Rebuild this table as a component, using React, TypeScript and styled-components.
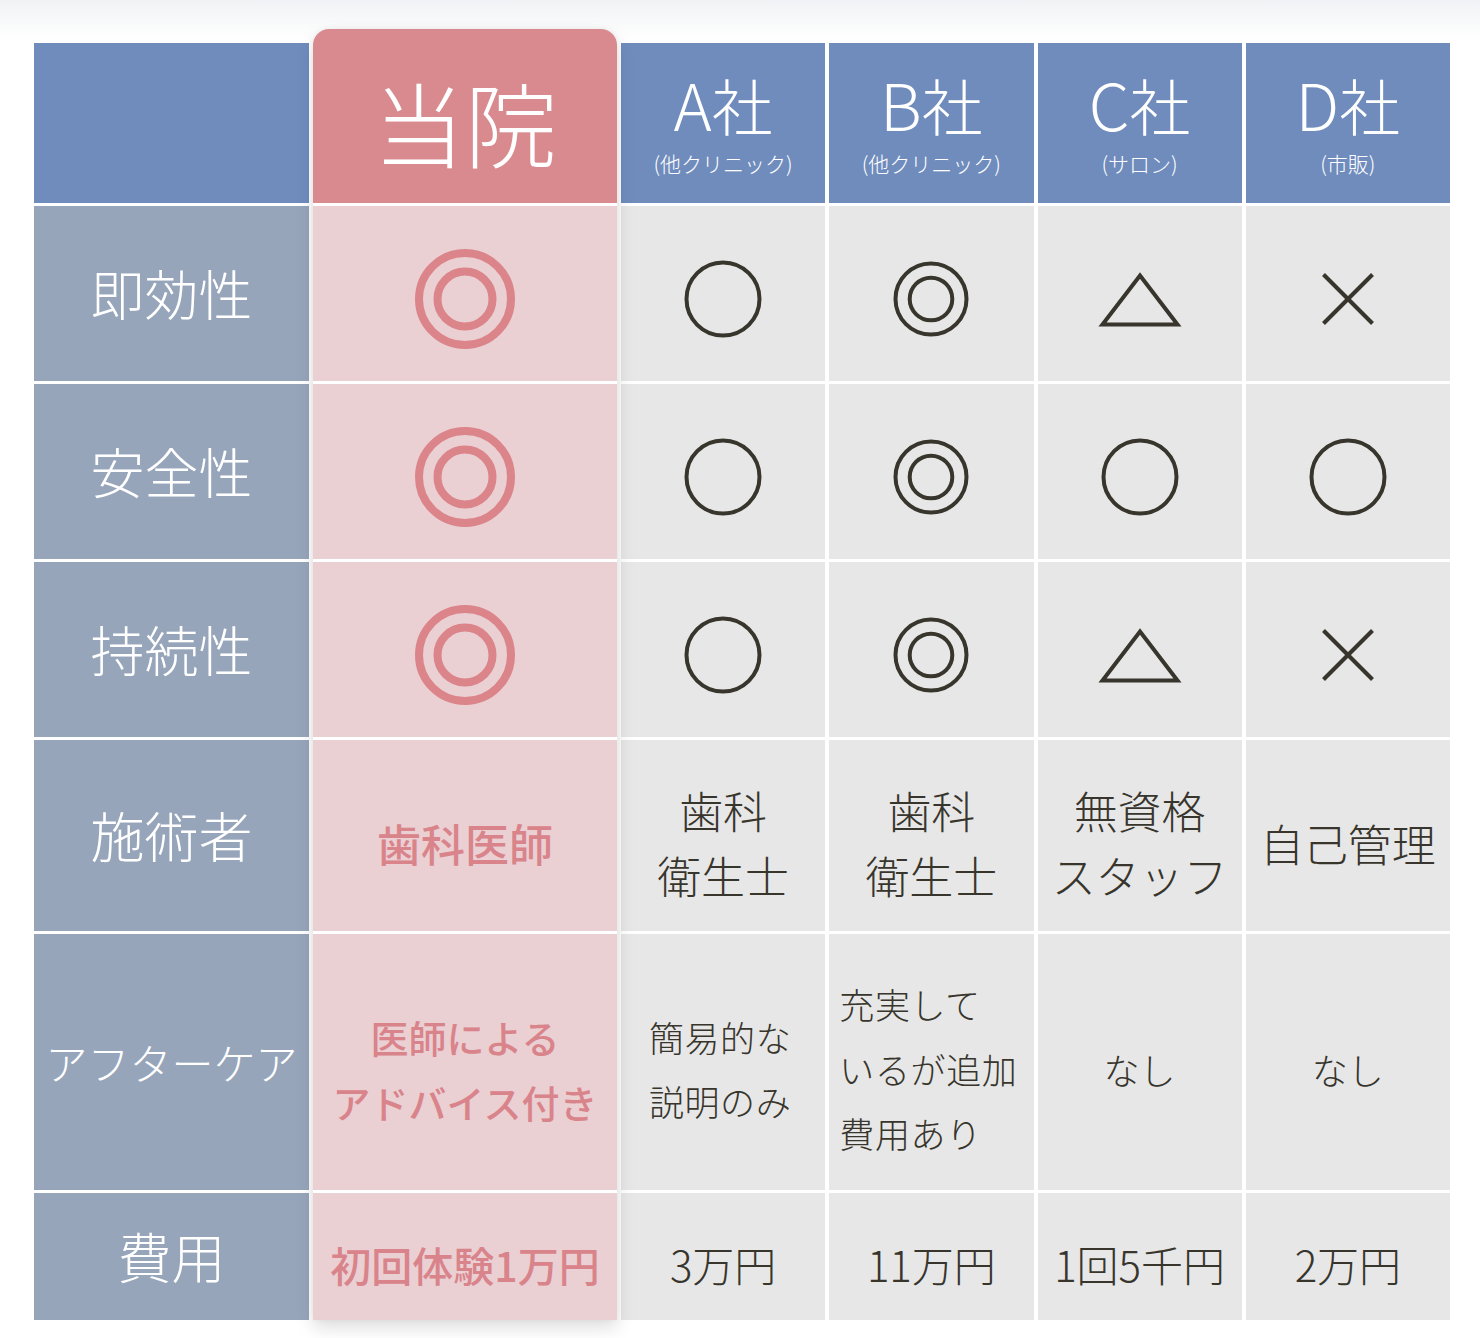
import React from "react";
import styled, { createGlobalStyle, css } from "styled-components";

const GlobalStyle = createGlobalStyle`
  html, body {
    margin: 0;
    padding: 0;
  }
  body {
    font-family: "Noto Sans CJK JP", "Noto Sans", sans-serif;
    background:
      linear-gradient(to bottom, #f1f2f5 0px, #f7f8f9 18px, #ffffff 40px) no-repeat;
    background-color: #ffffff;
  }
`;

const COLORS = {
  headBlue: "#6f8cbd",
  labelBlue: "#97a5bb",
  pinkHead: "#d98a8f",
  pinkCell: "#eacfd3",
  pinkInk: "#d9838a",
  grayCell: "#e7e7e7",
  ink: "#37352c",
};

const ROW_HEIGHTS = [175, 175, 175, 191, 256, 127];

const Page = styled.div`
  padding: 29px 0 18px 34px;
  width: 1416px;
`;

const Table = styled.div`
  display: flex;
  align-items: flex-end;
  gap: 4px;
`;

const Column = styled.div<{ $w: number }>`
  display: flex;
  flex-direction: column;
  gap: 3px;
  width: ${(p) => p.$w}px;
  flex: 0 0 ${(p) => p.$w}px;
`;

const FeaturedColumn = styled(Column)`
  position: relative;
  z-index: 1;
  background: #ffffff;
  border-radius: 16px 16px 0 0;
  box-shadow: 0 8px 18px rgba(0, 0, 0, 0.13), 0 0 6px rgba(0, 0, 0, 0.05);
`;

const HeadCell = styled.div`
  height: 160px;
  background: ${COLORS.headBlue};
  display: flex;
  flex-direction: column;
  align-items: center;
  justify-content: center;
  gap: 18px;
  padding-top: 1px;
  box-sizing: border-box;
  color: #ffffff;
`;

const FeaturedHead = styled.div`
  height: 174px;
  background: ${COLORS.pinkHead};
  border-radius: 16px 16px 0 0;
  display: flex;
  align-items: center;
  justify-content: center;
  padding-top: 10px;
  box-sizing: border-box;
  color: #ffffff;
  font-size: 92px;
  font-weight: 300;
  line-height: 1;
`;

const Brand = styled.div`
  font-size: 61px;
  font-weight: 300;
  line-height: 61px;
  height: 61px;
  white-space: nowrap;
`;

const BrandLetter = styled.span`
  font-size: 65px;
  font-weight: 300;
`;

const BrandSub = styled.div`
  font-size: 21px;
  font-weight: 300;
  line-height: 22px;
  white-space: nowrap;
`;

type Tone = "label" | "featured" | "plain";

const Cell = styled.div<{ $h: number; $tone: Tone }>`
  height: ${(p) => p.$h}px;
  box-sizing: border-box;
  display: flex;
  align-items: center;
  justify-content: center;
  text-align: center;
  ${(p) =>
    p.$tone === "label"
      ? css`
          background: ${COLORS.labelBlue};
          color: #ffffff;
        `
      : p.$tone === "featured"
      ? css`
          background: ${COLORS.pinkCell};
          color: ${COLORS.pinkInk};
          padding-top: 14px;
        `
      : css`
          background: ${COLORS.grayCell};
          color: ${COLORS.ink};
          padding-top: 14px;
        `}
`;

const LabelText = styled.div<{ $size: number }>`
  font-size: ${(p) => p.$size}px;
  font-weight: 300;
  line-height: 1.2;
  white-space: nowrap;
`;

const CellText = styled.div<{ $size: number; $lh: number; $bold?: boolean; $left?: boolean }>`
  font-size: ${(p) => p.$size}px;
  line-height: ${(p) => p.$lh}px;
  font-weight: ${(p) => (p.$bold ? 500 : 300)};
  text-align: ${(p) => (p.$left ? "left" : "center")};
  letter-spacing: ${(p) => (p.$left ? "0.6px" : "0")};
  margin-left: ${(p) => (p.$left ? "-6px" : "0")};
  white-space: nowrap;
`;

const SymbolBox = styled.div`
  display: flex;
  align-items: center;
  justify-content: center;
  margin-top: -4px;
`;

type Sym = "double" | "circle" | "triangle" | "cross";

const Symbol: React.FC<{ kind: Sym; featured?: boolean }> = ({ kind, featured }) => {
  const c = featured ? "#db8489" : COLORS.ink;
  if (kind === "double" && featured) {
    return (
      <svg width="104" height="104" viewBox="0 0 104 104">
        <circle cx="52" cy="52" r="46" fill="none" stroke={c} strokeWidth="8" />
        <circle cx="52" cy="52" r="27.5" fill="none" stroke={c} strokeWidth="8" />
      </svg>
    );
  }
  if (kind === "double") {
    return (
      <svg width="80" height="80" viewBox="0 0 80 80">
        <circle cx="40" cy="40" r="35.5" fill="none" stroke={c} strokeWidth="4" />
        <circle cx="40" cy="40" r="21.3" fill="none" stroke={c} strokeWidth="4" />
      </svg>
    );
  }
  if (kind === "circle") {
    return (
      <svg width="80" height="80" viewBox="0 0 80 80">
        <circle cx="40" cy="40" r="36.5" fill="none" stroke={c} strokeWidth="4" />
      </svg>
    );
  }
  if (kind === "triangle") {
    return (
      <svg width="90" height="64" viewBox="0 0 90 64">
        <polygon
          points="45,8.5 82.5,57.5 7.5,57.5"
          fill="none"
          stroke={c}
          strokeWidth="4"
          strokeLinejoin="miter"
        />
      </svg>
    );
  }
  return (
    <svg width="56" height="56" viewBox="0 0 56 56">
      <line x1="3.5" y1="3.5" x2="52.5" y2="52.5" stroke={c} strokeWidth="4" />
      <line x1="52.5" y1="3.5" x2="3.5" y2="52.5" stroke={c} strokeWidth="4" />
    </svg>
  );
};

type Content =
  | { t: "sym"; s: Sym }
  | { t: "text"; lines: string[]; size: number; lh: number; left?: boolean };

const rowLabels: { text: string; size: number }[] = [
  { text: "即効性", size: 54 },
  { text: "安全性", size: 54 },
  { text: "持続性", size: 54 },
  { text: "施術者", size: 54 },
  { text: "アフターケア", size: 42 },
  { text: "費用", size: 54 },
];

const featured: Content[] = [
  { t: "sym", s: "double" },
  { t: "sym", s: "double" },
  { t: "sym", s: "double" },
  { t: "text", lines: ["歯科医師"], size: 44, lh: 60 },
  { t: "text", lines: ["医師による", "アドバイス付き"], size: 38, lh: 65 },
  { t: "text", lines: ["初回体験1万円"], size: 41, lh: 56 },
];

const competitors: { letter: string; sub: string; cells: Content[] }[] = [
  {
    letter: "A",
    sub: "(他クリニック)",
    cells: [
      { t: "sym", s: "circle" },
      { t: "sym", s: "circle" },
      { t: "sym", s: "circle" },
      { t: "text", lines: ["歯科", "衛生士"], size: 44, lh: 65 },
      { t: "text", lines: ["簡易的な", "説明のみ"], size: 35, lh: 64, left: true },
      { t: "text", lines: ["3万円"], size: 42, lh: 56 },
    ],
  },
  {
    letter: "B",
    sub: "(他クリニック)",
    cells: [
      { t: "sym", s: "double" },
      { t: "sym", s: "double" },
      { t: "sym", s: "double" },
      { t: "text", lines: ["歯科", "衛生士"], size: 44, lh: 65 },
      { t: "text", lines: ["充実して", "いるが追加", "費用あり"], size: 35, lh: 64.5, left: true },
      { t: "text", lines: ["11万円"], size: 42, lh: 56 },
    ],
  },
  {
    letter: "C",
    sub: "(サロン)",
    cells: [
      { t: "sym", s: "triangle" },
      { t: "sym", s: "circle" },
      { t: "sym", s: "triangle" },
      { t: "text", lines: ["無資格", "スタッフ"], size: 44, lh: 65 },
      { t: "text", lines: ["なし"], size: 36, lh: 56 },
      { t: "text", lines: ["1回5千円"], size: 42, lh: 56 },
    ],
  },
  {
    letter: "D",
    sub: "(市販)",
    cells: [
      { t: "sym", s: "cross" },
      { t: "sym", s: "circle" },
      { t: "sym", s: "cross" },
      { t: "text", lines: ["自己管理"], size: 44, lh: 60 },
      { t: "text", lines: ["なし"], size: 36, lh: 56 },
      { t: "text", lines: ["2万円"], size: 42, lh: 56 },
    ],
  },
];

const renderContent = (c: Content, isFeatured: boolean) => {
  if (c.t === "sym") {
    return (
      <SymbolBox>
        <Symbol kind={c.s} featured={isFeatured} />
      </SymbolBox>
    );
  }
  return (
    <CellText $size={c.size} $lh={c.lh} $bold={isFeatured} $left={c.left}>
      {c.lines.map((l, i) => (
        <div key={i}>{l}</div>
      ))}
    </CellText>
  );
};

export default function App() {
  const otherW = (1416 - 275 - 304 - 20) / 4;
  return (
    <>
      <GlobalStyle />
      <Page>
        <Table>
          <Column $w={275}>
            <HeadCell />
            {rowLabels.map((r, i) => (
              <Cell key={i} $h={ROW_HEIGHTS[i]} $tone="label">
                <LabelText $size={r.size}>{r.text}</LabelText>
              </Cell>
            ))}
          </Column>

          <FeaturedColumn $w={304}>
            <FeaturedHead>当院</FeaturedHead>
            {featured.map((c, i) => (
              <Cell key={i} $h={ROW_HEIGHTS[i]} $tone="featured">
                {renderContent(c, true)}
              </Cell>
            ))}
          </FeaturedColumn>

          {competitors.map((comp) => (
            <Column key={comp.letter} $w={otherW}>
              <HeadCell>
                <Brand>
                  <BrandLetter>{comp.letter}</BrandLetter>社
                </Brand>
                <BrandSub>{comp.sub}</BrandSub>
              </HeadCell>
              {comp.cells.map((c, i) => (
                <Cell key={i} $h={ROW_HEIGHTS[i]} $tone="plain">
                  {renderContent(c, false)}
                </Cell>
              ))}
            </Column>
          ))}
        </Table>
      </Page>
    </>
  );
}
